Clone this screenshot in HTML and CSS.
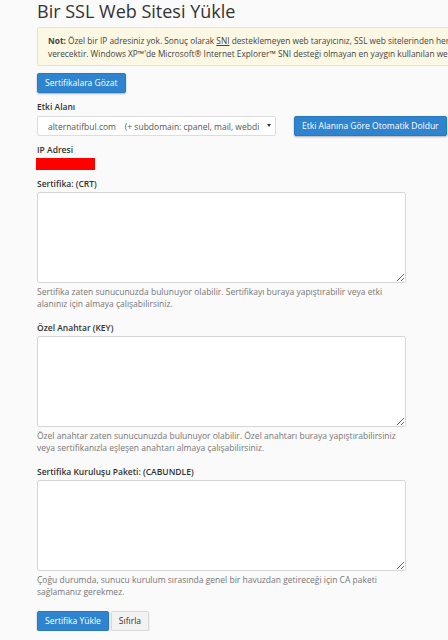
FILE: index.html
```html
<!DOCTYPE html>
<html lang="tr">
  <head>
    <title>Bir SSL Web Sitesi Yükle</title>
    <link rel="stylesheet" href="styles.css">
  </head>
  <body>
    <div class="page">
      <h1>Bir SSL Web Sitesi Yükle</h1>
      <div class="alert">
        <strong>Not:</strong> Özel bir IP adresiniz yok. Sonuç olarak <abbr>SNI</abbr> desteklemeyen web tarayıcınız, SSL web sitelerinden herhangi birine erişirken bir uyarı<br>
        verecektir. Windows XP™'de Microsoft® Internet Explorer™ SNI desteği olmayan en yaygın kullanılan web tarayıcısıdır.
      </div>
      <button class="btn btn-primary browse">Sertifikalara Gözat</button>

      <div class="field">
        <label class="label">Etki Alanı</label>
        <div class="domain-row">
          <div class="select-wrap">
            <select class="select">
              <option>alternatifbul.com&nbsp;&nbsp;&nbsp;&nbsp;(+ subdomain: cpanel, mail, webdisk, www)</option>
            </select>
          </div>
          <button class="btn btn-primary">Etki Alanına Göre Otomatik Doldur</button>
        </div>
      </div>

      <div class="field">
        <label class="label">IP Adresi</label>
        <div class="ip-hidden"></div>
      </div>

      <div class="field">
        <label class="label">Sertifika: (CRT)</label>
        <textarea class="textarea"></textarea>
        <p class="help">Sertifika zaten sunucunuzda bulunuyor olabilir. Sertifikayı buraya yapıştırabilir veya etki alanınız için almaya çalışabilirsiniz.</p>
      </div>

      <div class="field field-lg">
        <label class="label">Özel Anahtar (KEY)</label>
        <textarea class="textarea"></textarea>
        <p class="help">Özel anahtar zaten sunucunuzda bulunuyor olabilir. Özel anahtarı buraya yapıştırabilirsiniz veya sertifikanızla eşleşen anahtarı almaya çalışabilirsiniz.</p>
      </div>

      <div class="field field-lg">
        <label class="label">Sertifika Kuruluşu Paketi: (CABUNDLE)</label>
        <textarea class="textarea"></textarea>
        <p class="help">Çoğu durumda, sunucu kurulum sırasında genel bir havuzdan getireceği için CA paketi sağlamanız gerekmez.</p>
      </div>

      <div class="actions">
        <button class="btn btn-primary">Sertifika Yükle</button>
        <button class="btn btn-default">Sıfırla</button>
      </div>
    </div>
  </body>
</html>
```

FILE: styles.css
```css
* {
  box-sizing: border-box;
}
html,
body {
  overflow: hidden;
}
body {
  margin: 0;
  font-family: "Open Sans", "Liberation Sans", sans-serif;
  font-size: 8.5px;
  color: #333;
  background-color: #fafafa;
}
.page {
  padding-left: 37px;
}
h1 {
  margin: 0;
  font-size: 18px;
  font-weight: 400;
  line-height: 22px;
  color: #333;
  white-space: nowrap;
}
.alert {
  width: 680px;
  margin-top: 5px;
  padding: 6px 10px 5px;
  font-size: 8.3px;
  line-height: 13px;
  color: #444;
  background-color: #fcf8e3;
  border: 1px solid #f3e6a4;
  border-radius: 2px;
  white-space: nowrap;
}
.alert abbr {
  text-decoration: underline;
}
.btn {
  height: 20px;
  padding: 0 7px;
  font-family: inherit;
  font-size: 8.5px;
  line-height: 18px;
  border: 1px solid transparent;
  border-radius: 2px;
  cursor: pointer;
}
.btn-primary {
  color: #fff;
  background-color: #2e84ce;
  border-color: #2a79bd;
  box-shadow: 0 1px 2px rgba(0, 0, 0, 0.3);
}
.btn-default {
  color: #333;
  background-color: #f2f2f2;
  border-color: #d8d8d8;
  box-shadow: 0 1px 2px rgba(0, 0, 0, 0.15);
}
.browse {
  display: block;
  margin-top: 7px;
}
.field {
  margin-top: 8px;
}
.field-lg {
  margin-top: 13px;
}
.label {
  display: block;
  font-weight: 600;
  line-height: 12px;
  margin-bottom: 2px;
}
.domain-row {
  display: flex;
  align-items: center;
  gap: 18px;
  margin-top: 3px;
}
.select-wrap {
  position: relative;
  width: 239px;
}
.select-wrap:after {
  content: "";
  position: absolute;
  right: 5px;
  top: 8px;
  border-left: 2px solid transparent;
  border-right: 2px solid transparent;
  border-top: 3px solid #333;
}
.select {
  display: block;
  width: 100%;
  height: 20px;
  padding: 0 16px 0 10px;
  font-family: inherit;
  font-size: 8.5px;
  color: #555;
  background-color: #fff;
  border: 1px solid #ddd;
  border-radius: 2px;
  -webkit-appearance: none;
  appearance: none;
}
.ip-hidden {
  width: 59px;
  height: 12px;
  margin-left: -1px;
  background-color: #ff0000;
}
.textarea {
  display: block;
  width: 369px;
  height: 91px;
  background-color: #fff;
  border: 1px solid #d6d6d6;
  border-radius: 2px;
  resize: vertical;
}
.help {
  margin: 3px 0 0;
  width: 369px;
  line-height: 11.5px;
  color: #777;
}
.actions {
  margin-top: 14px;
  display: flex;
  gap: 2px;
}
```
